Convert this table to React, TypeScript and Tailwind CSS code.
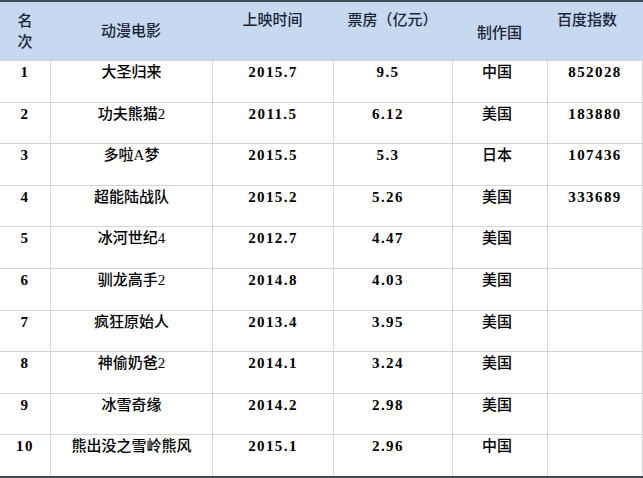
const ROWS = [
  ["1", "大圣归来", "2015.7", "9.5", "中国", "852028"],
  ["2", "功夫熊猫2", "2011.5", "6.12", "美国", "183880"],
  ["3", "多啦A梦", "2015.5", "5.3", "日本", "107436"],
  ["4", "超能陆战队", "2015.2", "5.26", "美国", "333689"],
  ["5", "冰河世纪4", "2012.7", "4.47", "美国", ""],
  ["6", "驯龙高手2", "2014.8", "4.03", "美国", ""],
  ["7", "疯狂原始人", "2013.4", "3.95", "美国", ""],
  ["8", "神偷奶爸2", "2014.1", "3.24", "美国", ""],
  ["9", "冰雪奇缘", "2014.2", "2.98", "美国", ""],
  ["10", "熊出没之雪岭熊风", "2015.1", "2.96", "中国", ""],
];

const FONT = "font-['Liberation_Serif','Noto_Sans_CJK_SC',serif]";
// number cells: serif digits spaced out like the old SimSun numerals
const NUM = "font-bold text-[15px] tracking-[1.4px]";

export default function App() {
  return (
    <div className={`h-[478px] w-[643px] overflow-hidden bg-white text-[15px] text-black ${FONT}`}>
      <div className="border-t-2 border-b-2 border-[#3e4b57]">
        {/* header */}
        <div className="grid h-[58px] grid-cols-[50px_162px_121px_119px_95px_96px] bg-[#c6d9f0] font-medium leading-[21px] text-[#1b2438]">
          <div className="flex flex-col items-center pt-[9px]">
            <span>名</span>
            <span>次</span>
          </div>
          <div className="pt-[19px] text-center">动漫电影</div>
          <div className="pt-[8px] text-center">上映时间</div>
          <div className="pt-[8px] text-center">票房（亿元）</div>
          <div className="pt-[21px] text-center">制作国</div>
          <div className="pr-[16px] pt-[8px] text-center">百度指数</div>
        </div>
        {/* body */}
        {ROWS.map((r, i) => (
          <div
            key={i}
            className="grid h-[41.6px] grid-cols-[50px_162px_121px_119px_95px_96px] border-t border-[#d6d6d6] leading-[20px]"
          >
            <div className={`pt-[1px] text-center ${NUM}`}>{r[0]}</div>
            <div className="border-l border-[#d6d6d6] pt-[1px] text-center font-medium">{r[1]}</div>
            <div className={`border-l border-[#d6d6d6] pt-[1px] text-center ${NUM}`}>{r[2]}</div>
            <div className={`border-l border-[#d6d6d6] pr-[10px] pt-[1px] text-center ${NUM}`}>{r[3]}</div>
            <div className="border-l border-[#d6d6d6] pr-[6px] pt-[1px] text-center font-medium">{r[4]}</div>
            <div className={`border-l border-r border-[#d6d6d6] pt-[1px] text-center ${NUM}`}>{r[5]}</div>
          </div>
        ))}
      </div>
    </div>
  );
}
